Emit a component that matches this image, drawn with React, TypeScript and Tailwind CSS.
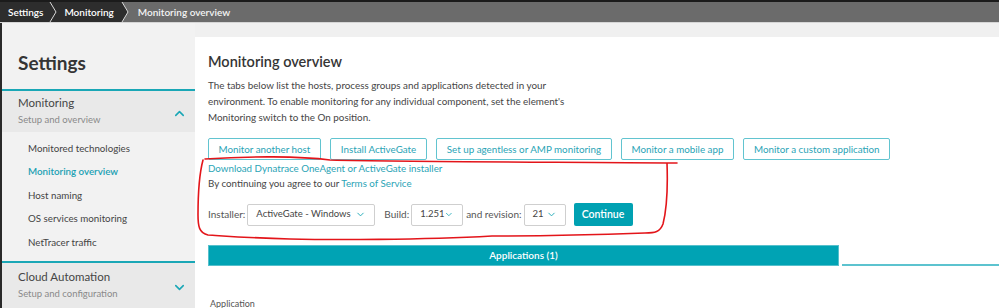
import { ChevronDown, ChevronUp } from "lucide-react";

const items = [
  "Monitored technologies",
  "Monitoring overview",
  "Host naming",
  "OS services monitoring",
  "NetTracer traffic",
];

const actions = [
  "Monitor another host",
  "Install ActiveGate",
  "Set up agentless or AMP monitoring",
  "Monitor a mobile app",
  "Monitor a custom application",
];

function Breadcrumb() {
  return (
    <div className="flex h-[22px] border-t-2 border-[#1b1b1b] bg-[#6b6b6b] text-[10px] font-semibold text-white">
      <div className="flex items-center bg-[#2d2d2d] pl-[8px] pr-[6px]">
        <span>Settings</span>
        <svg width="12" height="20" viewBox="0 0 12 20" className="ml-[3px]">
          <path d="M4 0 L10 10 L4 20" fill="none" stroke="#d8d8d8" strokeWidth="1" />
        </svg>
        <span className="ml-[6px]">Monitoring</span>
      </div>
      <svg width="10" height="20" viewBox="0 0 10 20" className="-ml-px">
        <path d="M0 0 L3 0 L9 10 L3 20 L0 20 Z" fill="#2d2d2d" />
        <path d="M3 0 L9 10 L3 20" fill="none" stroke="#d8d8d8" strokeWidth="1" />
      </svg>
      <div className="flex items-center pl-[9px] text-[#f4f4f4]">Monitoring overview</div>
    </div>
  );
}

function Sidebar() {
  return (
    <div className="w-[195px] shrink-0 border-l-2 border-[#2a2a2a] bg-[#f2f2f2]">
      <div className="pl-[16px] pt-[27px] pb-[13px] text-[19px] font-bold leading-[26px] text-[#353535]">
        Settings
      </div>
      <div className="border-t-2 border-[#1aa7b6]" />
      <div className="flex items-center justify-between bg-[#e9e9e9] pl-[16px] pr-[8px] pt-[4px] pb-[4px]">
        <div>
          <div className="text-[11.5px] leading-[16px] text-[#454545]">Monitoring</div>
          <div className="mt-[1px] text-[9.5px] leading-[16px] text-[#8a8a8a]">Setup and overview</div>
        </div>
        <ChevronUp size={15} strokeWidth={2.5} className="mt-[4px] text-[#1aa7b6]" />
      </div>
      <div className="pt-[5px] pb-[7px]">
        {items.map((it) => (
          <div
            key={it}
            className={
              it === "Monitoring overview"
                ? "pl-[26px] text-[9.75px] font-semibold leading-[23.4px] text-[#1aa0b3]"
                : "pl-[26px] text-[9.75px] leading-[23.4px] text-[#444]"
            }
          >
            {it}
          </div>
        ))}
      </div>
      <div className="border-t-2 border-[#1aa7b6]" />
      <div className="flex items-center justify-between bg-[#e9e9e9] pl-[16px] pr-[8px] pt-[6px] pb-[6px]">
        <div>
          <div className="text-[11.5px] leading-[16px] text-[#454545]">Cloud Automation</div>
          <div className="mt-[1px] text-[9.5px] leading-[16px] text-[#8a8a8a]">Setup and configuration</div>
        </div>
        <ChevronDown size={15} strokeWidth={2.5} className="mt-[4px] text-[#1aa7b6]" />
      </div>
    </div>
  );
}

function Select({ value, width }: { value: string; width: string }) {
  return (
    <div
      className={`flex h-[22px] items-center justify-between whitespace-nowrap rounded-[2px] border border-[#cfcfcf] bg-white pl-[8px] pr-[8px] text-[9.5px] text-[#444] ${width}`}
    >
      <span>{value}</span>
      <ChevronDown size={11} strokeWidth={2} className="text-[#1aa7b6]" />
    </div>
  );
}

export default function App() {
  return (
    <div
      className="relative h-[308px] w-[999px] overflow-hidden bg-[#f0f0f0]"
      style={{ fontFamily: "Lato, 'Liberation Sans', sans-serif" }}
    >
      <Breadcrumb />
      <div className="border-t border-[#d6d6d6]" />
      <div className="flex">
        <Sidebar />
        <div className="mt-[14px] flex-1 bg-white pl-[13px] pt-[15px]">
          <h1 className="text-[14.5px] font-semibold leading-[20px] text-[#353535]">Monitoring overview</h1>
          <p className="mt-[5px] whitespace-nowrap text-[9.85px] leading-[16px] text-[#454545]">
            The tabs below list the hosts, process groups and applications detected in your
            <br />
            environment. To enable monitoring for any individual component, set the element&apos;s
            <br />
            Monitoring switch to the On position.
          </p>
          <div className="mt-[13px] flex gap-[9.5px]">
            {actions.map((a) => (
              <div
                key={a}
                className="flex h-[22px] items-center whitespace-nowrap rounded-[2px] border border-[#62c4d0] px-[9.5px] text-[9.8px] text-[#2aa4b6]"
              >
                {a}
              </div>
            ))}
          </div>
          <div className="mt-[1px] text-[9.75px] leading-[15px] text-[#2aa4b6]">
            Download Dynatrace OneAgent or ActiveGate installer
          </div>
          <div className="text-[9.75px] leading-[15px] text-[#454545]">
            By continuing you agree to our <span className="text-[#2aa4b6]">Terms of Service</span>
          </div>
          <div className="mt-[12px] flex items-center text-[10px] text-[#555]">
            <span>Installer:</span>
            <div className="ml-[2px]">
              <Select value="ActiveGate - Windows" width="w-[128px]" />
            </div>
            <span className="ml-[9px]">Build:</span>
            <div className="ml-[2px]">
              <Select value="1.251" width="w-[52px]" />
            </div>
            <span className="ml-[3px]">and revision:</span>
            <div className="ml-[2px]">
              <Select value="21" width="w-[42px]" />
            </div>
            <div className="ml-[8px] flex h-[23px] w-[59px] items-center justify-center rounded-[2px] bg-[#00a1b2] text-[10.5px] font-semibold text-white">
              Continue
            </div>
          </div>
          <div className="mt-[19px] flex items-end">
            <div className="flex h-[21px] w-[631px] items-center justify-center border border-[#56c0cc] bg-[#00a3b4] text-[10px] font-semibold text-white">
              Applications (1)
            </div>
            <div className="ml-[3px] flex-1 border-b-2 border-[#5cc3cf]" />
          </div>
          <div className="mt-[31px] pl-[2px] text-[9px] text-[#555]">Application</div>
        </div>
      </div>
      <svg className="pointer-events-none absolute left-0 top-0" width="999" height="308" viewBox="0 0 999 308">
        <path
          d="M205 159 C250 156 300 156 330 160 C420 162 560 162 677 163 M667 163 C668 190 666 212 663 224 C660 232 655 233 645 233 C560 236 500 236 492 236 C420 240 330 240 290 239 C250 238 225 236 208 235 C199 233 198 226 198 215 C198 195 199 175 203 160"
          fill="none"
          stroke="#e3151a"
          strokeWidth="1.6"
          strokeLinecap="round"
        />
      </svg>
    </div>
  );
}
